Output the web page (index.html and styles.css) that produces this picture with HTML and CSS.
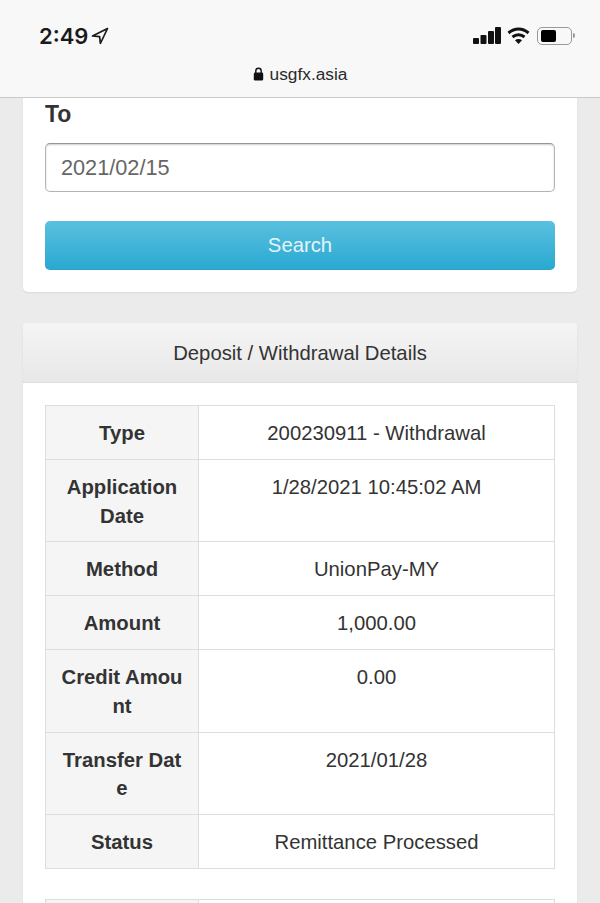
FILE: index.html
```html
<!DOCTYPE html>
<html lang="en">

<head>
    <meta charset="UTF-8">
    <meta name="viewport" content="width=device-width, initial-scale=1.0">
    <title>usgfx.asia</title>
    <link rel="stylesheet" href="styles.css">
</head>

<body>

    <header class="browser-bar">
        <div class="status-row">
            <div class="clock">
                <span>2:49</span>
                <svg class="arrow" width="18" height="18" viewBox="0 0 18 18">
                    <path d="M16.5 1.5 L1.5 9 L8.6 9.6 L9.4 16.5 Z" fill="none" stroke="#1a1a1a" stroke-width="1.7" stroke-linejoin="round"/>
                </svg>
            </div>
            <div class="status-icons">
                <svg width="28" height="17" viewBox="0 0 28 17">
                    <rect x="0" y="11" width="6" height="6" rx="1" fill="#111"/>
                    <rect x="7.5" y="8" width="6" height="9" rx="1" fill="#111"/>
                    <rect x="15" y="4" width="6" height="13" rx="1" fill="#111"/>
                    <rect x="22" y="0" width="6" height="17" rx="1" fill="#111"/>
                </svg>
                <svg width="23" height="17" viewBox="0 0 23 17">
                    <path d="M1.5 6 C7.5 0.8 15.5 0.8 21.5 6" fill="none" stroke="#111" stroke-width="3"/>
                    <path d="M5.5 10 C9 7 14 7 17.5 10" fill="none" stroke="#111" stroke-width="3"/>
                    <path d="M11.5 17 L8 13.2 C10 11.6 13 11.6 15 13.2 Z" fill="#111"/>
                </svg>
                <div class="battery">
                    <div class="battery-level"></div>
                </div>
                <div class="battery-tip"></div>
            </div>
        </div>
        <div class="url-row">
            <svg width="11" height="14" viewBox="0 0 11 14">
                <path d="M2.8 6 V4 a2.7 2.7 0 0 1 5.4 0 V6" fill="none" stroke="#111" stroke-width="1.4"/>
                <rect x="0.8" y="5.6" width="9.4" height="8" rx="1.4" fill="#111"/>
            </svg>
            <span>usgfx.asia</span>
        </div>
    </header>

    <main class="content">
        <section class="card search-card">
            <label class="field-label" for="to">To</label>
            <input class="date-input" id="to" type="text" value="2021/02/15">
            <button class="search-btn">Search</button>
        </section>

        <section class="card details-card">
            <div class="card-title">Deposit / Withdrawal Details</div>
            <div class="card-body">
                <table class="details-table">
                    <tr><th>Type</th><td>200230911 - Withdrawal</td></tr>
                    <tr><th>Application Date</th><td>1/28/2021 10:45:02 AM</td></tr>
                    <tr><th>Method</th><td>UnionPay-MY</td></tr>
                    <tr><th>Amount</th><td>1,000.00</td></tr>
                    <tr><th>Credit Amount</th><td>0.00</td></tr>
                    <tr><th>Transfer Date</th><td>2021/01/28</td></tr>
                    <tr><th>Status</th><td>Remittance Processed</td></tr>
                </table>
                <table class="details-table">
                    <tr><th>&nbsp;</th><td>&nbsp;</td></tr>
                </table>
            </div>
        </section>
    </main>

</body>

</html>
```

FILE: styles.css
```css
* {
    box-sizing: border-box;
}

html,
body {
    margin: 0;
    height: 903px;
    overflow: hidden;
}

body {
    font-family: "Liberation Sans", Arial, sans-serif;
    background-color: #ebebeb;
    color: #333;
}

.browser-bar {
    height: 98px;
    background-color: #f8f8f8;
    border-bottom: 1px solid #c9c9c9;
    padding: 0 25px 0 39px;
}

.status-row {
    display: flex;
    justify-content: space-between;
    align-items: center;
    height: 53px;
    padding-top: 18px;
}

.clock {
    display: flex;
    align-items: center;
    gap: 3px;
    font-family: Inter, "Liberation Sans", sans-serif;
    font-size: 22px;
    font-weight: 600;
    color: #1a1a1a;
}

.status-icons {
    display: flex;
    align-items: center;
    gap: 6px;
}

.battery {
    width: 35px;
    height: 18px;
    margin-left: 1px;
    padding: 2px 3px;
    border: 1.5px solid #999;
    border-radius: 5px;
}

.battery-level {
    width: 15px;
    height: 100%;
    background-color: #000;
    border-radius: 2px;
}

.battery-tip {
    width: 2px;
    height: 5px;
    margin-left: -5px;
    background-color: #999;
    border-radius: 0 2px 2px 0;
}

.url-row {
    display: flex;
    justify-content: center;
    align-items: center;
    gap: 6px;
    height: 44px;
    padding-bottom: 2px;
    margin-left: -14px;
    font-size: 17.3px;
    color: #2b2b2b;
}

.content {
    padding: 0 23px;
}

.card {
    background-color: #fff;
    border-radius: 5px;
    box-shadow: 0 1px 2px rgba(0, 0, 0, 0.08);
}

.search-card {
    display: flex;
    flex-direction: column;
    padding: 2px 22px 22px;
    border-radius: 0 0 5px 5px;
}

.field-label {
    font-size: 23px;
    font-weight: bold;
    line-height: 28px;
    margin-bottom: 15px;
}

.date-input {
    width: 100%;
    height: 49px;
    padding: 0 15px;
    border: 1px solid #b4b4b4;
    border-top-color: #969696;
    border-radius: 5px;
    box-shadow: inset 0 1px 2px rgba(0, 0, 0, 0.2);
    font-family: inherit;
    font-size: 21.7px;
    color: #666;
}

.search-btn {
    width: 100%;
    height: 49px;
    margin-top: 29px;
    border: none;
    border-radius: 5px;
    background: linear-gradient(to bottom, #5bc0de, #2aa9d2);
    border-bottom: 1px solid #28a4cc;
    font-family: inherit;
    font-size: 20.3px;
    color: #e4f4f9;
}

.details-card {
    margin-top: 31px;
}

.card-title {
    height: 60px;
    line-height: 60px;
    text-align: center;
    font-size: 20.3px;
    color: #333;
    background: linear-gradient(to bottom, #f5f5f5, #e8e8e8);
    border-bottom: 1px solid #ddd;
    border-radius: 5px 5px 0 0;
}

.card-body {
    padding: 22px;
}

.details-table {
    width: 100%;
    border-collapse: collapse;
    table-layout: fixed;
    margin-bottom: 30px;
    font-size: 20.3px;
    line-height: 28.8px;
}

.details-table th,
.details-table td {
    padding: 13px 14px 11px;
    border: 1px solid #ddd;
    text-align: center;
    vertical-align: top;
    word-break: break-all;
}

.details-table th {
    width: 153px;
    background-color: #f5f5f5;
    font-weight: bold;
}
```
